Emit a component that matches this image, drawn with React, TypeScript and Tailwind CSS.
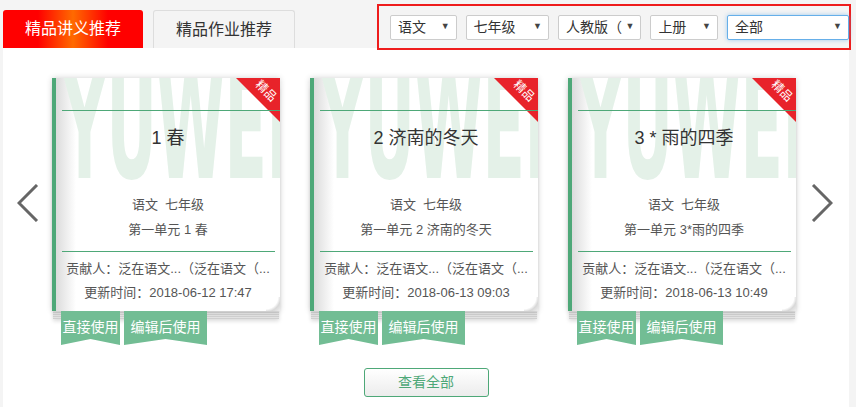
import React from "react";

const cards = [
  { title: "1 春", unit: "第一单元  1 春", time: "2018-06-12 17:47" },
  { title: "2 济南的冬天", unit: "第一单元  2 济南的冬天", time: "2018-06-13 09:03" },
  { title: "3 * 雨的四季", unit: "第一单元  3*雨的四季", time: "2018-06-13 10:49" },
];

const selects = [
  { label: "语文", w: "w-[67px]" },
  { label: "七年级", w: "w-[84px]" },
  { label: "人教版（", w: "w-[84px]" },
  { label: "上册", w: "w-[68px]" },
];

function Arrow({ dir }: { dir: "left" | "right" }) {
  return (
    <svg width="22" height="38" viewBox="0 0 22 38" fill="none">
      <path
        d={dir === "left" ? "M20 1 L2 19 L20 37" : "M2 1 L20 19 L2 37"}
        stroke="#666"
        strokeWidth="3"
      />
    </svg>
  );
}

function Ribbon({ children, w }: { children: React.ReactNode; w: string }) {
  return (
    <div
      className={`${w} h-[34px] bg-[#72bd94] text-white text-[14px] flex justify-center pt-[6px] [clip-path:polygon(0_0,100%_0,100%_100%,50%_82%,0_100%)]`}
    >
      {children}
    </div>
  );
}

function Card({ title, unit, time }: { title: string; unit: string; time: string }) {
  return (
    <div className="w-[228px]">
      <div className="relative">
        {/* stacked pages under the card */}
        <div className="absolute left-[1px] right-[1px] top-[8px] h-[233px] bg-[repeating-linear-gradient(180deg,#cfcfcf_0px,#cfcfcf_1px,#e2e2e2_1px,#e2e2e2_2px)] shadow-[0_2px_4px_rgba(0,0,0,0.15)]" />
        <div className="relative h-[233px] bg-white border-l-[4px] border-[#4ea878] overflow-hidden shadow-[0_0_6px_rgba(0,0,0,0.18)]">
          {/* left page shading */}
          <div className="absolute left-0 top-0 bottom-0 w-[20px] bg-gradient-to-r from-[#dcdcdc] to-white" />
          {/* watermark */}
          <div className="absolute left-[6px] top-[-27px] text-[150px] leading-none font-bold text-[#e4f1e8] tracking-[-1px] origin-left scale-x-[0.46] select-none [font-family:'Liberation_Sans_Narrow','DejaVu_Sans_Condensed',sans-serif]">
            YUWEN
          </div>
          {/* badge */}
          <div className="absolute right-0 top-0 w-[44px] h-[44px] bg-[#e8232a] [clip-path:polygon(0_0,100%_0,100%_100%)]" />
          <div className="absolute right-[-6px] top-[7px] w-[40px] text-center rotate-45 text-white text-[12px] leading-none">
            精品
          </div>
          <div className="relative">
            <div className="ml-[6px] mt-[32px] h-px bg-[#4ea878]" />
            <div className="text-center text-[18px] text-[#333] mt-[14px] leading-[26px]">{title}</div>
            <div className="text-center text-[13px] text-[#555] mt-[45px] leading-[18px]">语文&nbsp;&nbsp;七年级</div>
            <div className="text-center text-[13px] text-[#555] mt-[7px] leading-[18px]">{unit}</div>
            <div className="ml-[6px] mr-[5px] mt-[12px] h-px bg-[#4ea878]" />
            <div className="text-center text-[13px] text-[#555] mt-[8px] leading-[18px] whitespace-nowrap">
              贡献人：泛在语文...（泛在语文（...
            </div>
            <div className="text-center text-[13px] text-[#555] mt-[6px] leading-[18px]">更新时间：{time}</div>
          </div>
          {/* page curl */}
          <div className="absolute right-0 bottom-0 w-[14px] h-[14px] bg-[radial-gradient(circle_at_0_0,#fff_60%,#d8d8d8_75%,#eee_100%)] rounded-tl-[10px]" />
        </div>
      </div>
      <div className="flex gap-[4px] ml-[9px]">
        <Ribbon w="w-[59px]">直接使用</Ribbon>
        <Ribbon w="w-[83px]">编辑后使用</Ribbon>
      </div>
    </div>
  );
}

export default function App() {
  return (
    <div className="w-[856px] h-[407px] bg-[#f4f4f4] overflow-hidden [font-family:'Liberation_Sans','Noto_Sans_CJK_SC',sans-serif]">
      {/* HEADER */}
      <div className="h-[48px] flex items-start">
        <div className="flex gap-[10px] ml-[3px] mt-[10px]">
          <div className="w-[140px] h-[38px] rounded-t-[3px] bg-[linear-gradient(90deg,#ff0000_0%,#ff0000_25%,#ff6a00_50%,#ff0000_75%,#ff0000_100%)] text-white text-[16px] flex items-center justify-center">
            精品讲义推荐
          </div>
          <div className="w-[142px] h-[38px] rounded-t-[3px] border border-b-0 border-[#ddd] bg-[#f4f4f4] text-[#333] text-[16px] flex items-center justify-center">
            精品作业推荐
          </div>
        </div>
        <div className="relative z-10 ml-auto mr-[5px] mt-[4px] w-[474px] h-[46px] border-[2px] border-[#ee1c1c] flex items-center gap-[9px] pl-[11px]">
          {selects.map((s) => (
            <div
              key={s.label}
              className={`${s.w} h-[25px] bg-white border border-[#ccc] rounded-[2px] flex items-center justify-between pl-[7px] pr-[6px] text-[14px] text-[#333]`}
            >
              <span>{s.label}</span>
              <span className="text-[9px] text-[#444]">▼</span>
            </div>
          ))}
          <div className="w-[123px] h-[25px] bg-white border border-[#66afe9] rounded-[2px] shadow-[0_0_4px_rgba(102,175,233,0.6)] flex items-center justify-between pl-[7px] pr-[6px] text-[14px] text-[#333]">
            <span>全部</span>
            <span className="text-[9px] text-[#444]">▼</span>
          </div>
        </div>
      </div>

      {/* BODY */}
      <div className="ml-[3px] w-[846px] h-[359px] bg-white">
        <div className="flex items-start pt-[30px]">
          <div className="w-[49px] flex justify-center pt-[106px]">
            <Arrow dir="left" />
          </div>
          <div className="flex gap-[30px]">
            {cards.map((c) => (
              <Card key={c.title} {...c} />
            ))}
          </div>
          <div className="ml-[15px] pt-[106px]">
            <Arrow dir="right" />
          </div>
        </div>
        <div className="flex justify-center mt-[23px]">
          <div className="w-[125px] h-[29px] border border-[#4ea878] rounded-[3px] bg-gradient-to-b from-white to-[#ececec] text-[#4ea878] text-[14px] flex items-center justify-center">
            查看全部
          </div>
        </div>
      </div>
    </div>
  );
}
